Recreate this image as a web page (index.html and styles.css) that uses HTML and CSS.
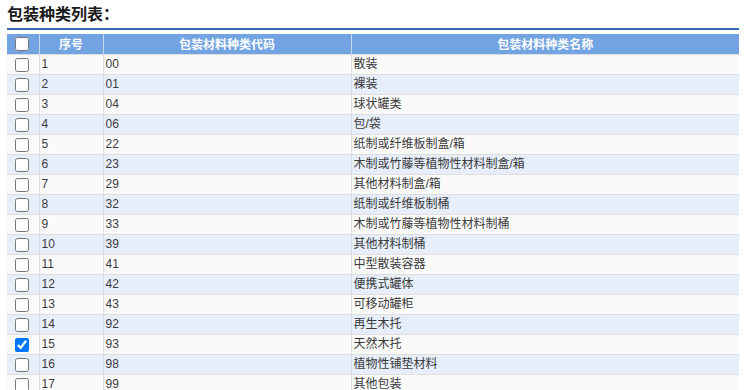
FILE: index.html
```html
<!DOCTYPE html>
<html>
<head>
<meta charset="utf-8">
<link rel="stylesheet" href="styles.css">
</head>
<body>
<div class="page">
  <div class="title">包装种类列表：</div>
  <div class="rule"></div>
  <table class="grid">
    <colgroup>
      <col class="w-chk">
      <col class="w-seq">
      <col class="w-code">
      <col class="w-name">
    </colgroup>
    <thead>
      <tr>
        <th class="c-chk"><input type="checkbox" class="chk"></th>
        <th>序号</th>
        <th>包装材料种类代码</th>
        <th>包装材料种类名称</th>
      </tr>
    </thead>
    <tbody>
      <tr><td class="c-chk"><input type="checkbox" class="chk"></td><td>1</td><td>00</td><td>散装</td></tr>
      <tr><td class="c-chk"><input type="checkbox" class="chk"></td><td>2</td><td>01</td><td>裸装</td></tr>
      <tr><td class="c-chk"><input type="checkbox" class="chk"></td><td>3</td><td>04</td><td>球状罐类</td></tr>
      <tr><td class="c-chk"><input type="checkbox" class="chk"></td><td>4</td><td>06</td><td>包/袋</td></tr>
      <tr><td class="c-chk"><input type="checkbox" class="chk"></td><td>5</td><td>22</td><td>纸制或纤维板制盒/箱</td></tr>
      <tr><td class="c-chk"><input type="checkbox" class="chk"></td><td>6</td><td>23</td><td>木制或竹藤等植物性材料制盒/箱</td></tr>
      <tr><td class="c-chk"><input type="checkbox" class="chk"></td><td>7</td><td>29</td><td>其他材料制盒/箱</td></tr>
      <tr><td class="c-chk"><input type="checkbox" class="chk"></td><td>8</td><td>32</td><td>纸制或纤维板制桶</td></tr>
      <tr><td class="c-chk"><input type="checkbox" class="chk"></td><td>9</td><td>33</td><td>木制或竹藤等植物性材料制桶</td></tr>
      <tr><td class="c-chk"><input type="checkbox" class="chk"></td><td>10</td><td>39</td><td>其他材料制桶</td></tr>
      <tr><td class="c-chk"><input type="checkbox" class="chk"></td><td>11</td><td>41</td><td>中型散装容器</td></tr>
      <tr><td class="c-chk"><input type="checkbox" class="chk"></td><td>12</td><td>42</td><td>便携式罐体</td></tr>
      <tr><td class="c-chk"><input type="checkbox" class="chk"></td><td>13</td><td>43</td><td>可移动罐柜</td></tr>
      <tr><td class="c-chk"><input type="checkbox" class="chk"></td><td>14</td><td>92</td><td>再生木托</td></tr>
      <tr><td class="c-chk"><input type="checkbox" class="chk" checked></td><td>15</td><td>93</td><td>天然木托</td></tr>
      <tr><td class="c-chk"><input type="checkbox" class="chk"></td><td>16</td><td>98</td><td>植物性铺垫材料</td></tr>
      <tr><td class="c-chk"><input type="checkbox" class="chk"></td><td>17</td><td>99</td><td>其他包装</td></tr>
    </tbody>
  </table>
</div>
</body>
</html>
```
FILE: styles.css
```css
html, body {
  margin: 0;
  padding: 0;
  background: #ffffff;
}
body {
  font-family: "Liberation Sans", "Noto Sans CJK SC", sans-serif;
  font-size: 12px;
  color: #3a3a3a;
  overflow: hidden;
}
.page {
  width: 732px;
  padding-left: 7px;
}
.title {
  font-family: "Noto Sans CJK SC", sans-serif;
  font-size: 16px;
  font-weight: bold;
  line-height: 20px;
  padding-top: 3px;
  color: #1a1a1a;
}
.rule {
  height: 2px;
  margin-top: 5px;
  background: #2f6db5;
}
.grid {
  width: 732px;
  margin-top: 4px;
  border-collapse: collapse;
  table-layout: fixed;
}
.w-chk { width: 32px; }
.w-seq { width: 64px; }
.w-code { width: 248px; }
.w-name { width: 388px; }
.grid th,
.grid td {
  box-sizing: border-box;
}
.grid th {
  height: 20px;
  padding: 0;
  background: #72a3e2;
  color: #ffffff;
  font-family: "Noto Sans CJK SC", sans-serif;
  font-weight: bold;
  font-size: 12px;
  text-align: center;
  border-left: 1px solid #c5d9f3;
  line-height: 20px;
}
.grid th:first-child {
  border-left: none;
}
.grid td {
  height: 20px;
  padding: 0 0 0 2px;
  line-height: 19px;
  border-top: 1px solid #dedede;
  border-left: 1px solid #d6dbe3;
  white-space: nowrap;
  overflow: hidden;
}
.grid td:first-child {
  border-left: none;
}
.grid tbody tr:nth-child(odd) td {
  background: #fafafa;
}
.grid tbody tr:nth-child(even) td {
  background: #e6eefa;
}
.grid .c-chk {
  padding: 0 0 0 8px;
  text-align: left;
}
.chk {
  width: 14px;
  height: 14px;
  margin: 0;
  display: block;
}
```
